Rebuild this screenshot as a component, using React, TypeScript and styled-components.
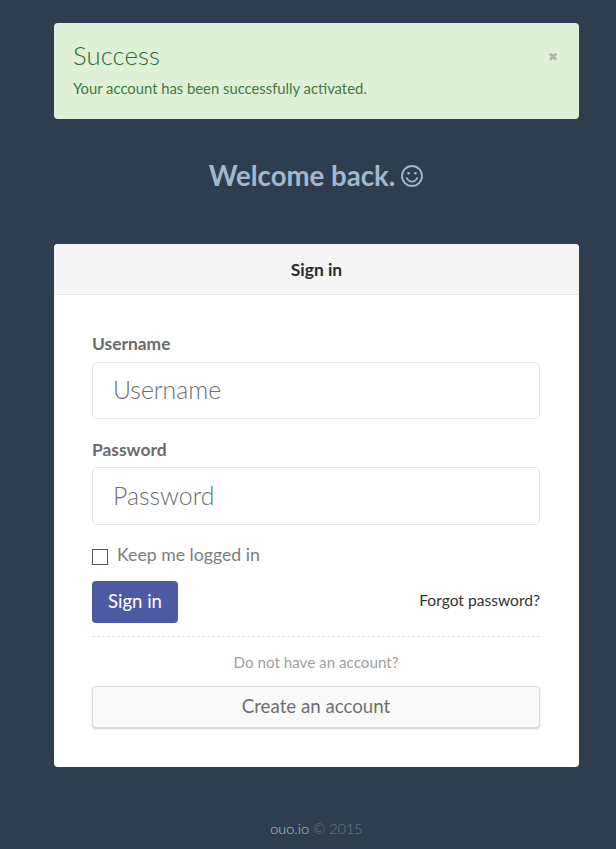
import styled, { createGlobalStyle } from "styled-components";

const GlobalStyle = createGlobalStyle`
  html, body {
    margin: 0;
    padding: 0;
    background: #2f3e4e;
    font-family: "Lato", "Open Sans", sans-serif;
  }
  * {
    box-sizing: border-box;
  }
`;

const Page = styled.div`
  width: 616px;
  height: 849px;
  overflow: hidden;
  padding: 23px 37px 0 54px;
`;

const Alert = styled.div`
  position: relative;
  height: 96px;
  padding: 18px 19px;
  background: #dff0d8;
  border-radius: 4px;
  color: #3c763d;
`;

const AlertTitle = styled.h4`
  margin: 0 0 9px;
  font-size: 25.8px;
  line-height: 28px;
  font-weight: 300;
  color: #35692f;
`;

const AlertText = styled.p`
  margin: 0;
  font-size: 14.8px;
  line-height: 21px;
  font-weight: 400;
  color: #3f7a40;
`;

const CloseButton = styled.button`
  position: absolute;
  top: 24px;
  right: 21px;
  padding: 0;
  border: 0;
  background: none;
  color: #a9b8a4;
  font-family: "DejaVu Sans", sans-serif;
  font-size: 12px;
  line-height: 20px;
  font-weight: 700;
`;

const Welcome = styled.h1`
  display: flex;
  justify-content: center;
  align-items: center;
  gap: 5px;
  height: 40px;
  margin: 37px 0 48px;
  color: #a3b7cd;
  font-size: 27.6px;
  font-weight: 700;
  line-height: 40px;
`;

const Card = styled.div`
  height: 523px;
  background: #fff;
  border-radius: 4px;
  overflow: hidden;
`;

const CardHeader = styled.div`
  height: 51px;
  background: #f5f5f5;
  border-bottom: 1px solid #e6e6e6;
  color: #2b2b2b;
  font-size: 17.4px;
  font-weight: 700;
  line-height: 52px;
  text-align: center;
`;

const CardBody = styled.form`
  padding: 39.4px 39px 0 38px;
`;

const Field = styled.div`
  margin-bottom: 20.4px;
`;

const Label = styled.label`
  display: block;
  margin-bottom: 7.6px;
  color: #6b6b6b;
  font-size: 17.4px;
  font-weight: 700;
  line-height: 20px;
`;

const Input = styled.input`
  display: block;
  width: 100%;
  height: 57.4px;
  padding: 0 20px 2px;
  border: 1px solid #e6e6e6;
  border-radius: 5px;
  background: #fff;
  font-family: inherit;
  font-size: 24.8px;
  font-weight: 300;
  color: #333;
  &::placeholder {
    color: #6e6e6e;
    opacity: 1;
  }
`;

const CheckRow = styled.label`
  display: flex;
  align-items: center;
  gap: 9px;
  height: 20px;
  color: #7d7d7d;
  font-size: 17.7px;
  font-weight: 400;
  line-height: 20px;
`;

const CheckBox = styled.span`
  display: block;
  width: 16px;
  height: 16px;
  margin-top: 3px;
  border: 1px solid #555;
  background: #fff;
`;

const ActionRow = styled.div`
  display: flex;
  justify-content: space-between;
  align-items: center;
  margin-top: 16px;
  padding-bottom: 13px;
  border-bottom: 1px dashed #e6e6e6;
`;

const PrimaryButton = styled.button`
  width: 86px;
  height: 42px;
  padding: 0 0 2px;
  border: 0;
  border-radius: 4px;
  background: #4f5aa4;
  color: #fff;
  font-family: inherit;
  font-size: 18.5px;
  font-weight: 400;
`;

const ForgotLink = styled.a`
  margin-top: -4px;
  color: #333;
  font-size: 15.6px;
  font-weight: 400;
  line-height: 20px;
`;

const Prompt = styled.p`
  margin: 15px 0 14px;
  color: #a0a0a0;
  font-size: 15.2px;
  font-weight: 400;
  line-height: 20px;
  text-align: center;
`;

const SecondaryButton = styled.button`
  display: block;
  width: 100%;
  height: 42px;
  padding: 0 0 2px;
  border: 1px solid #dcdcdc;
  border-radius: 4px;
  background: #f9f9f9;
  box-shadow: 0 1px 2px rgba(0, 0, 0, 0.2);
  color: #6f6f6f;
  font-family: inherit;
  font-size: 18.7px;
  font-weight: 400;
`;

const Footer = styled.footer`
  margin-top: 52px;
  color: #6f7c8b;
  font-size: 14.5px;
  font-weight: 300;
  line-height: 20px;
  text-align: center;
`;

const FooterLink = styled.a`
  color: #b4c2d1;
`;

const Smiley = () => (
  <svg width="24" height="24" viewBox="0 0 24 24" fill="none" stroke="#a3b7cd" strokeWidth="1.8" strokeLinecap="round">
    <circle cx="12" cy="12" r="10" />
    <circle cx="8.5" cy="9.2" r="1.3" fill="#a3b7cd" stroke="none" />
    <circle cx="15.5" cy="9.2" r="1.3" fill="#a3b7cd" stroke="none" />
    <path d="M6.8 14c1 2.4 3 3.6 5.2 3.6s4.200-1.200 5.200-3.600" />
  </svg>
);

const App = () => (
  <>
    <GlobalStyle />
    <Page>
      <Alert>
        <AlertTitle>Success</AlertTitle>
        <AlertText>Your account has been successfully activated.</AlertText>
        <CloseButton type="button">✖</CloseButton>
      </Alert>

      <Welcome>
        Welcome back. <Smiley />
      </Welcome>

      <Card>
        <CardHeader>Sign in</CardHeader>
        <CardBody>
          <Field>
            <Label>Username</Label>
            <Input placeholder="Username" />
          </Field>
          <Field>
            <Label>Password</Label>
            <Input placeholder="Password" type="password" />
          </Field>
          <CheckRow>
            <CheckBox />
            Keep me logged in
          </CheckRow>
          <ActionRow>
            <PrimaryButton type="button">Sign in</PrimaryButton>
            <ForgotLink>Forgot password?</ForgotLink>
          </ActionRow>
          <Prompt>Do not have an account?</Prompt>
          <SecondaryButton type="button">Create an account</SecondaryButton>
        </CardBody>
      </Card>

      <Footer>
        <FooterLink>ouo.io</FooterLink> © 2015
      </Footer>
    </Page>
  </>
);

export default App;
